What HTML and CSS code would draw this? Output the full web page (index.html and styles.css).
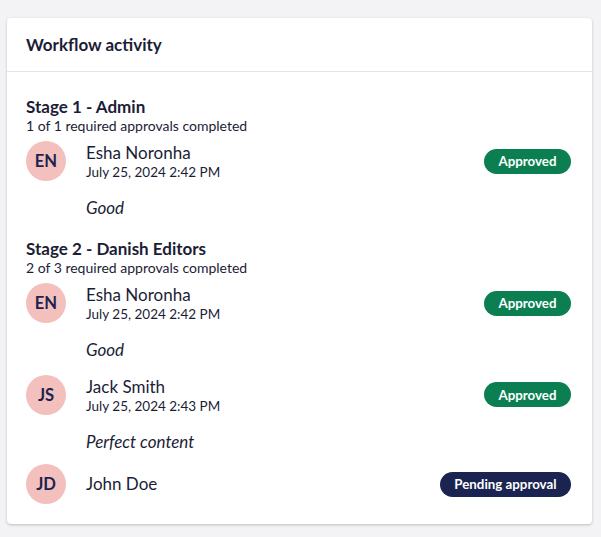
FILE: index.html
```html
<!DOCTYPE html>
<html>
<head>
<meta charset="utf-8">
<link rel="stylesheet" href="styles.css">
</head>
<body>
<div class="card">
  <div class="card-header">Workflow activity</div>
  <div class="card-body">
    <section class="stage">
      <h2 class="stage-title">Stage 1 - Admin</h2>
      <div class="stage-sub">1 of 1 required approvals completed</div>
      <div class="approvals">
        <div class="approval">
          <div class="row">
            <div class="avatar">EN</div>
            <div class="info">
              <div class="name">Esha Noronha</div>
              <div class="date">July 25, 2024 2:42 PM</div>
            </div>
            <span class="badge approved">Approved</span>
          </div>
          <div class="comment">Good</div>
        </div>
      </div>
    </section>
    <section class="stage">
      <h2 class="stage-title">Stage 2 - Danish Editors</h2>
      <div class="stage-sub">2 of 3 required approvals completed</div>
      <div class="approvals">
        <div class="approval">
          <div class="row">
            <div class="avatar">EN</div>
            <div class="info">
              <div class="name">Esha Noronha</div>
              <div class="date">July 25, 2024 2:42 PM</div>
            </div>
            <span class="badge approved">Approved</span>
          </div>
          <div class="comment">Good</div>
        </div>
        <div class="approval">
          <div class="row">
            <div class="avatar">JS</div>
            <div class="info">
              <div class="name">Jack Smith</div>
              <div class="date">July 25, 2024 2:43 PM</div>
            </div>
            <span class="badge approved">Approved</span>
          </div>
          <div class="comment">Perfect content</div>
        </div>
        <div class="approval">
          <div class="row">
            <div class="avatar">JD</div>
            <div class="info">
              <div class="name">John Doe</div>
            </div>
            <span class="badge pending">Pending approval</span>
          </div>
        </div>
      </div>
    </section>
  </div>
</div>
</body>
</html>
```

FILE: styles.css
```css
html, body {
  margin: 0;
  padding: 0;
}
body {
  background: #f3f3f5;
  font-family: Lato, "Open Sans", sans-serif;
  color: #1b1d36;
  padding: 18px 9px 13px 7px;
}
.card {
  background: #fff;
  border-radius: 4px;
  box-shadow: 0 1px 3px rgba(0, 0, 0, 0.22);
}
.card-header {
  height: 53px;
  display: flex;
  align-items: center;
  padding: 0 19px;
  font-size: 17px;
  font-weight: 700;
  border-bottom: 1px solid #e3e3e6;
}
.card-body {
  padding: 24px 21px 20px 19px;
  display: flex;
  flex-direction: column;
  gap: 20px;
}
.stage-title {
  margin: 0;
  font-size: 17px;
  font-weight: 700;
  line-height: 21px;
}
.stage-sub {
  font-size: 14px;
  line-height: 18px;
}
.approvals {
  margin-top: 4px;
  display: flex;
  flex-direction: column;
  gap: 12.5px;
}
.row {
  display: flex;
  align-items: center;
}
.avatar {
  width: 40px;
  height: 40px;
  border-radius: 50%;
  background: #f4c0bd;
  color: #1b2450;
  display: flex;
  align-items: center;
  justify-content: center;
  font-weight: 700;
  font-size: 16.6px;
  flex: none;
}
.info {
  flex: 1;
  margin-left: 20px;
  padding: 3px 0;
}
.name {
  font-size: 17px;
  line-height: 22px;
}
.date {
  font-size: 13.5px;
  line-height: 16px;
}
.badge {
  height: 25px;
  border-radius: 13px;
  padding: 0 14.5px;
  display: flex;
  align-items: center;
  color: #fff;
  font-size: 13.3px;
  font-weight: 700;
}
.approved {
  background: #0b7f52;
}
.pending {
  background: #1b2450;
}
.comment {
  margin-top: 15px;
  margin-left: 60px;
  font-size: 17px;
  line-height: 20px;
  font-style: italic;
}
```
